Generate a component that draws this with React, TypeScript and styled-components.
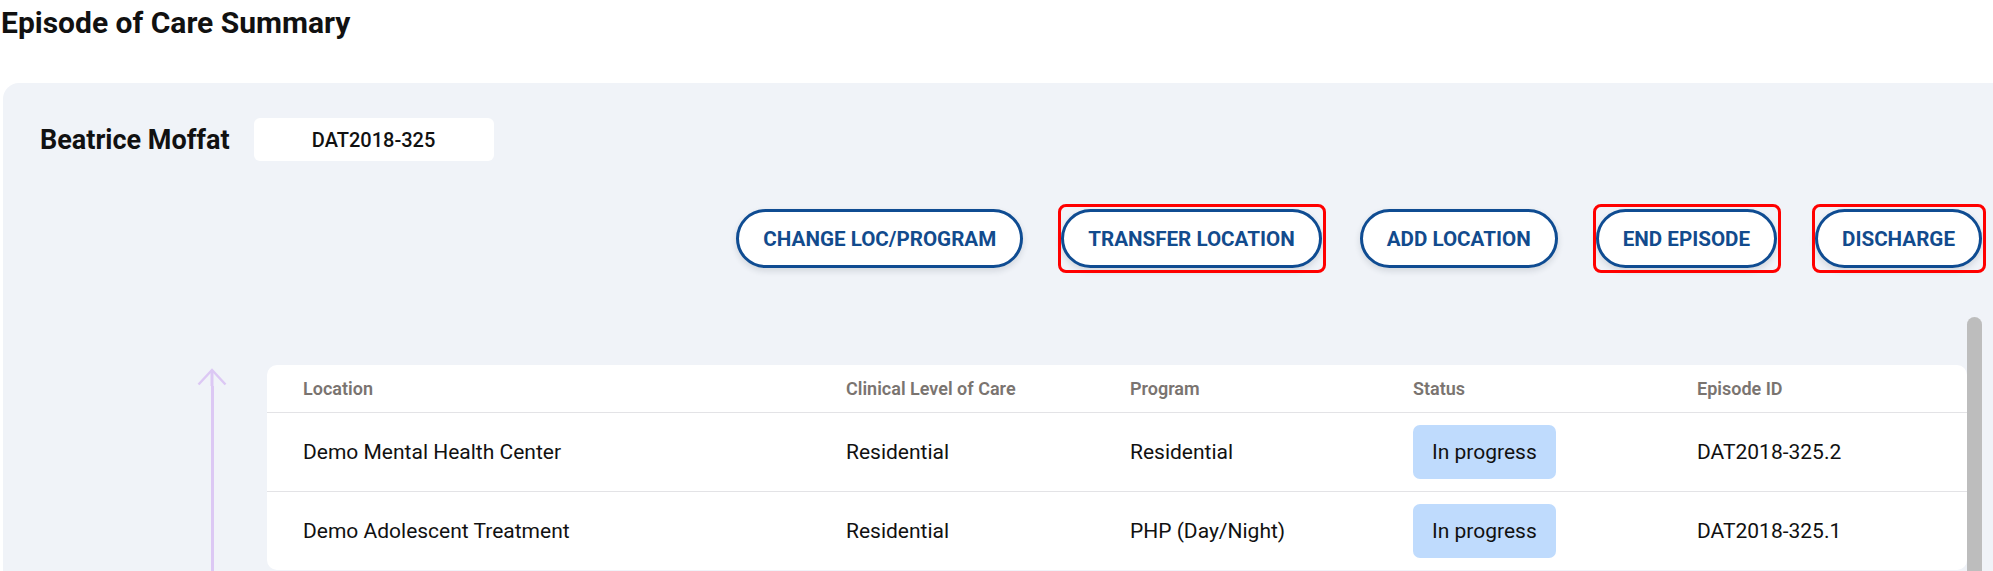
import styled, { createGlobalStyle } from "styled-components";

const GlobalStyle = createGlobalStyle`
  html, body {
    margin: 0;
    padding: 0;
    overflow: hidden;
    background: #ffffff;
  }
  body {
    font-family: Roboto, "Liberation Sans", sans-serif;
    color: #111111;
  }
`;

type Episode = {
  location: string;
  level: string;
  program: string;
  status: string;
  id: string;
};

const episodes: Episode[] = [
  {
    location: "Demo Mental Health Center",
    level: "Residential",
    program: "Residential",
    status: "In progress",
    id: "DAT2018-325.2",
  },
  {
    location: "Demo Adolescent Treatment",
    level: "Residential",
    program: "PHP (Day/Night)",
    status: "In progress",
    id: "DAT2018-325.1",
  },
];

const actions = [
  { label: "CHANGE LOC/PROGRAM", flagged: false },
  { label: "TRANSFER LOCATION", flagged: true },
  { label: "ADD LOCATION", flagged: false },
  { label: "END EPISODE", flagged: true },
  { label: "DISCHARGE", flagged: true },
];

const columns = ["Location", "Clinical Level of Care", "Program", "Status", "Episode ID"];

const App = () => {
  return (
    <Page>
      <GlobalStyle />
      <Title>Episode of Care Summary</Title>
      <Panel>
        <PatientRow>
          <PatientName>Beatrice Moffat</PatientName>
          <PatientId>DAT2018-325</PatientId>
        </PatientRow>
        <Actions>
          {actions.map((a) => (
            <ActionButton key={a.label} $flagged={a.flagged}>
              {a.label}
            </ActionButton>
          ))}
        </Actions>
        <ScrollArea>
          <ScrollContent>
            <Timeline>
              <svg width="30" height="18" viewBox="0 0 30 18">
                <path
                  d="M1.5 16.5 L15 2 L28.5 16.5"
                  fill="none"
                  stroke="#dcc8f4"
                  strokeWidth="2.5"
                />
                <path d="M15 2 V18" stroke="#dcc8f4" strokeWidth="3" />
              </svg>
              <TimelineLine />
            </Timeline>
            <Card>
              <Table>
                {columns.map((c) => (
                  <HeadCell key={c}>{c}</HeadCell>
                ))}
                {episodes.map((e, i) => {
                  const last = i === episodes.length - 1;
                  return [
                    <Cell key={`loc${i}`} $last={last}>{e.location}</Cell>,
                    <Cell key={`lvl${i}`} $last={last}>{e.level}</Cell>,
                    <Cell key={`prg${i}`} $last={last}>{e.program}</Cell>,
                    <Cell key={`st${i}`} $last={last}>
                      <StatusPill>{e.status}</StatusPill>
                    </Cell>,
                    <Cell key={`id${i}`} $last={last}>{e.id}</Cell>,
                  ];
                })}
              </Table>
            </Card>
          </ScrollContent>
          <ScrollTrack>
            <ScrollThumb />
          </ScrollTrack>
        </ScrollArea>
      </Panel>
    </Page>
  );
};
export default App;

const Page = styled.div`
  padding: 6px 0 0 3px;
`;

const Title = styled.h1`
  margin: 0 0 43px -2px;
  font-size: 30px;
  line-height: 34px;
  font-weight: 700;
  color: #111111;
`;

const Panel = styled.section`
  width: 2016px;
  box-sizing: border-box;
  background: #f0f3f8;
  border-radius: 16px 16px 0 0;
  padding: 35px 37px 0 37px;
`;

const PatientRow = styled.div`
  display: flex;
  align-items: center;
  gap: 24px;
  height: 43px;
`;

const PatientName = styled.h2`
  margin: 0;
  font-size: 27px;
  font-weight: 700;
  color: #111111;
`;

const PatientId = styled.div`
  width: 240px;
  height: 43px;
  display: flex;
  align-items: center;
  justify-content: center;
  background: #ffffff;
  border-radius: 6px;
  font-size: 20px;
  font-weight: 500;
  color: #111111;
`;

const Actions = styled.div`
  display: flex;
  justify-content: flex-end;
  gap: 38px;
  margin-top: 48px;
`;

const ActionButton = styled.button<{ $flagged: boolean }>`
  position: relative;
  box-sizing: border-box;
  height: 59px;
  padding: 0 24px;
  border: 3px solid #0f4c92;
  border-radius: 30px;
  background: #ffffff;
  color: #124b8d;
  font-family: Roboto, "Liberation Sans", sans-serif;
  font-size: 20.6px;
  font-weight: 700;
  cursor: pointer;
  box-shadow: 0 3px 6px rgba(30, 40, 60, 0.14);

  &::after {
    content: "";
    display: ${({ $flagged }) => ($flagged ? "block" : "none")};
    position: absolute;
    inset: -8px -7px -8px -6px;
    border: 3px solid #ff0000;
    border-radius: 8px;
    pointer-events: none;
  }
`;

const ScrollArea = styled.div`
  margin-top: 49px;
  height: 300px;
  display: flex;
  overflow: hidden;
`;

const ScrollContent = styled.div`
  flex: 1;
  display: flex;
  padding-top: 48px;
  overflow: hidden;
`;

const ScrollTrack = styled.div`
  width: 15px;
  flex-shrink: 0;
`;

const ScrollThumb = styled.div`
  height: 265px;
  background: #bdbdbd;
  border-radius: 8px;
`;

const Timeline = styled.div`
  width: 227px;
  flex-shrink: 0;
  box-sizing: border-box;
  padding: 3px 40px 0 0;
  display: flex;
  flex-direction: column;
  align-items: flex-end;

  svg {
    display: block;
  }
`;

const TimelineLine = styled.div`
  flex: 1;
  width: 3px;
  margin-right: 13.5px;
  background: #dcc8f4;
`;

const Card = styled.div`
  flex: 1;
  align-self: flex-start;
  background: #ffffff;
  border-radius: 10px;
`;

const Table = styled.div`
  display: grid;
  grid-template-columns: 543px 284px 283px 284px 1fr;
`;

const HeadCell = styled.div`
  box-sizing: border-box;
  height: 48px;
  padding-left: 36px;
  display: flex;
  align-items: center;
  border-bottom: 1px solid #e3e3e6;
  font-size: 18px;
  font-weight: 600;
  color: #7a7470;
`;

const Cell = styled.div<{ $last: boolean }>`
  box-sizing: border-box;
  height: ${({ $last }) => ($last ? "78px" : "79px")};
  padding-left: 36px;
  display: flex;
  align-items: center;
  border-bottom: ${({ $last }) => ($last ? "none" : "1px solid #e3e3e6")};
  font-size: 21px;
  color: #111111;
`;

const StatusPill = styled.span`
  display: inline-flex;
  align-items: center;
  justify-content: center;
  height: 54px;
  padding: 0 19px;
  background: #bfdbfd;
  border-radius: 7px;
  font-size: 21px;
  color: #111111;
`;
